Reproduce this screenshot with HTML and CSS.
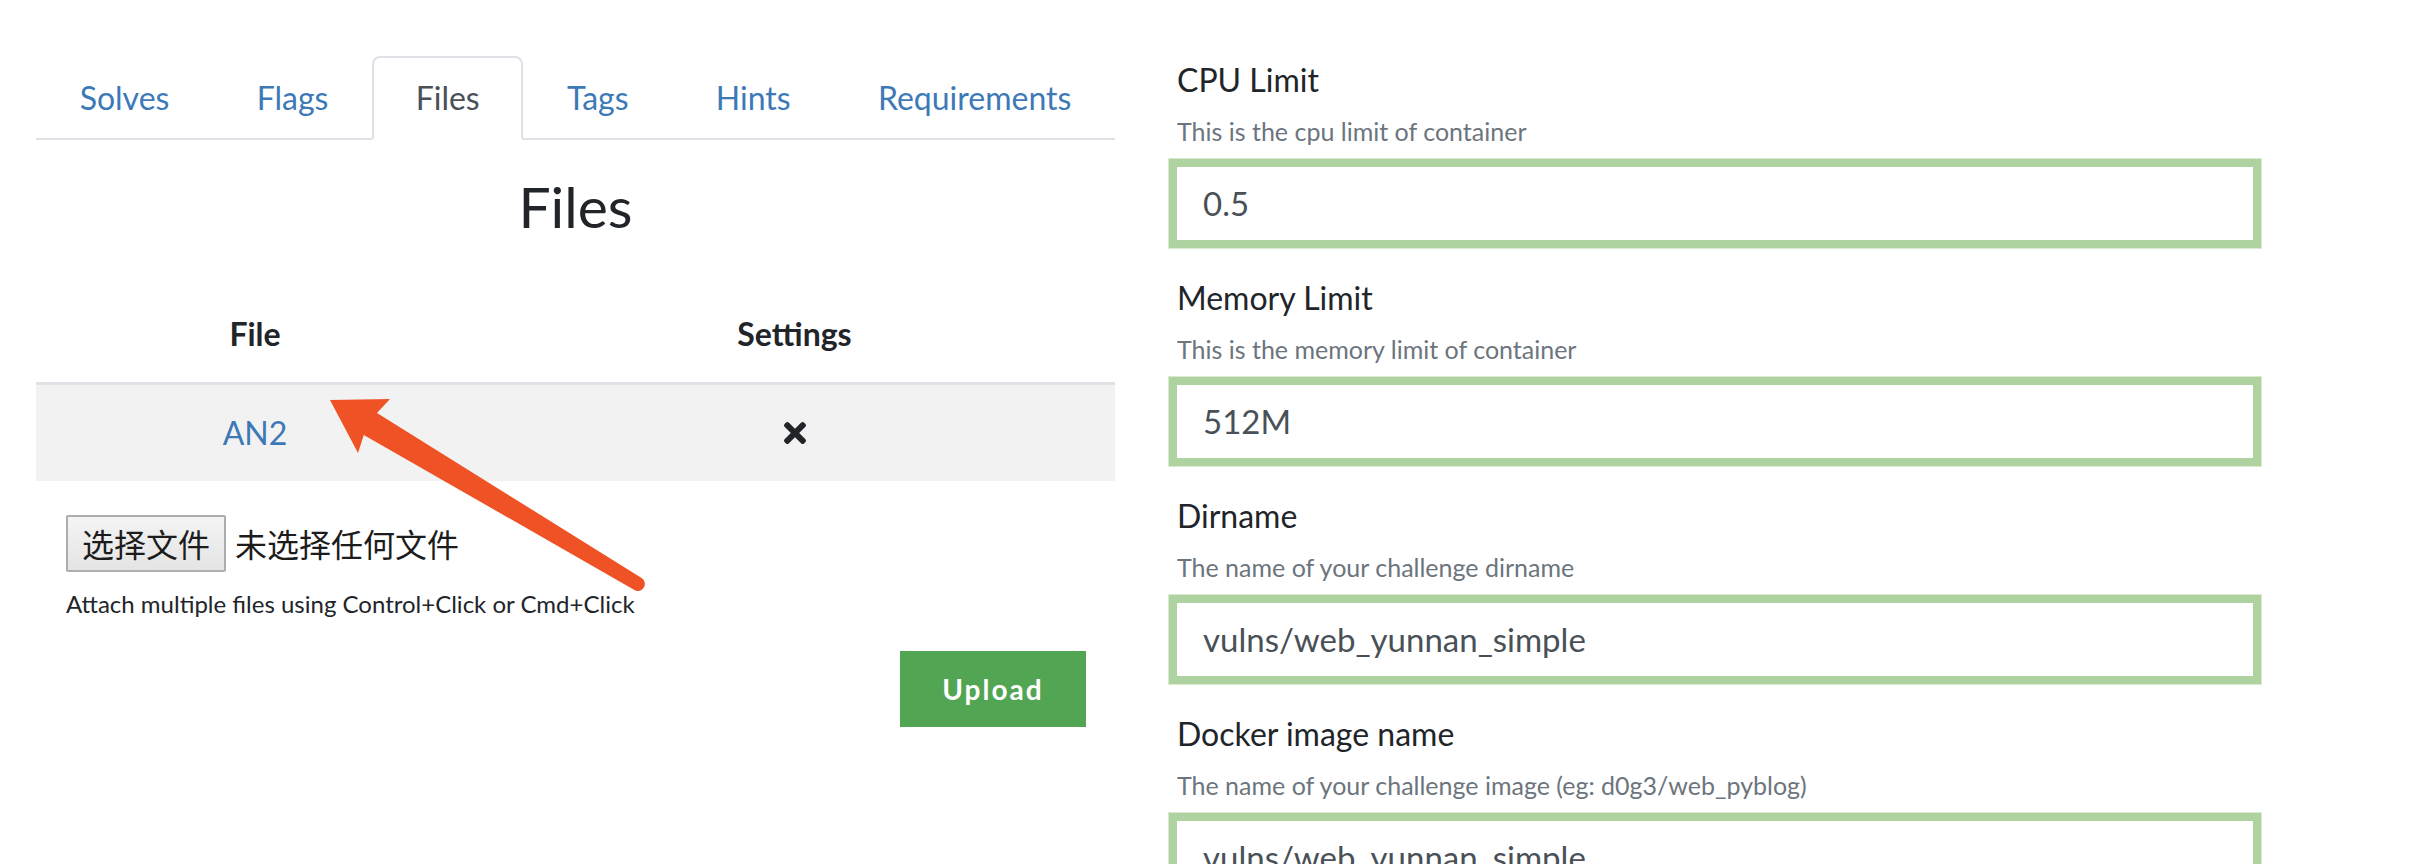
FILE: index.html
```html
<!DOCTYPE html>
<html lang="en">
<head>
<meta charset="utf-8">
<title>Challenge Files</title>
<link rel="stylesheet" href="styles.css">
</head>
<body>
<div class="page">
  <section class="left">
    <nav class="tabs">
      <a class="tab">Solves</a>
      <a class="tab">Flags</a>
      <a class="tab active">Files</a>
      <a class="tab">Tags</a>
      <a class="tab">Hints</a>
      <a class="tab">Requirements</a>
    </nav>
    <h3 class="title">Files</h3>
    <table class="files">
      <thead>
        <tr><th class="col-file">File</th><th>Settings</th></tr>
      </thead>
      <tbody>
        <tr>
          <td class="col-file"><a class="file-link">AN2</a></td>
          <td>
            <svg class="icon-times" width="22" height="32" viewBox="0 0 352 512" aria-hidden="true"><path fill="#212529" d="M242.72 256l100.07-100.07c12.28-12.28 12.28-32.190 0-44.48l-22.24-22.24c-12.28-12.28-32.19-12.28-44.48 0L176 189.28 75.93 89.21c-12.28-12.28-32.19-12.28-44.48 0L9.21 111.45c-12.28 12.28-12.28 32.19 0 44.48L109.28 256 9.21 356.07c-12.28 12.28-12.28 32.19 0 44.48l22.24 22.24c12.28 12.28 32.2 12.28 44.48 0L176 322.72l100.07 100.07c12.28 12.28 32.2 12.28 44.48 0l22.24-22.24c12.28-12.28 12.28-32.19 0-44.48L242.72 256z"/></svg>
          </td>
        </tr>
      </tbody>
    </table>
    <form class="upload">
      <div class="file-picker">
        <button type="button" class="file-btn">选择文件</button>
        <span class="file-none">未选择任何文件</span>
      </div>
      <small class="hint">Attach multiple files using Control+Click or Cmd+Click</small>
      <div class="actions">
        <button type="button" class="btn-upload">Upload</button>
      </div>
    </form>
  </section>

  <section class="right">
    <div class="group">
      <label class="label">CPU Limit</label>
      <small class="desc">This is the cpu limit of container</small>
      <div class="field">0.5</div>
    </div>
    <div class="group">
      <label class="label">Memory Limit</label>
      <small class="desc">This is the memory limit of container</small>
      <div class="field">512M</div>
    </div>
    <div class="group">
      <label class="label">Dirname</label>
      <small class="desc">The name of your challenge dirname</small>
      <div class="field">vulns/web_yunnan_simple</div>
    </div>
    <div class="group">
      <label class="label">Docker image name</label>
      <small class="desc">The name of your challenge image (eg: d0g3/web_pyblog)</small>
      <div class="field">vulns/web_yunnan_simple</div>
    </div>
  </section>
</div>

<svg class="annotation" width="2412" height="864" viewBox="0 0 2412 864" aria-hidden="true">
  <path fill="#ef5224" d="M330 400 L390 399 L377 413 L641.6 578 A7 7 0 0 1 634.4 590 L363.8 435 L358 453 Z"/>
</svg>
</body>
</html>
```

FILE: styles.css
```css
html, body {
  margin: 0;
  padding: 0;
  background: #ffffff;
}

body {
  font-family: Lato, "Noto Sans CJK SC", sans-serif;
  color: #212529;
  font-size: 32px;
  line-height: 48px;
  height: 864px;
  overflow: hidden;
  position: relative;
}

.page {
  display: flex;
  align-items: flex-start;
  gap: 62px;
  padding: 56px 0 0 36px;
}

/* ---------- left column ---------- */
.left {
  width: 1079px;
  flex: none;
}

.tabs {
  display: flex;
  border-bottom: 2px solid #dee2e6;
}

.tab {
  flex: 1 1 auto;
  text-align: center;
  padding: 16px 32px;
  border: 2px solid transparent;
  border-top-left-radius: 8px;
  border-top-right-radius: 8px;
  margin-bottom: -2px;
  color: #3d79b7;
  cursor: pointer;
}

.tab.active {
  color: #495057;
  background: #ffffff;
  border-color: #dee2e6 #dee2e6 #ffffff;
}

.title {
  margin: 33px 0 0;
  text-align: center;
  font-size: 57px;
  line-height: 67px;
  font-weight: 400;
}

.files {
  width: 100%;
  border-collapse: collapse;
  margin-top: 46px;
  text-align: center;
}

.files th {
  font-weight: 700;
  padding: 24px;
  border-bottom: 3px solid #dee2e6;
}

.files td {
  padding: 24px;
  background: #f2f2f2;
}

.files .col-file {
  width: 390px;
}

.file-link {
  color: #3d79b7;
}

.icon-times {
  display: inline-block;
  vertical-align: top;
  margin-top: 8px;
}

.upload {
  padding: 34px 29px 0 30px;
}

.file-picker {
  display: flex;
  align-items: center;
  gap: 9px;
}

.file-btn {
  font-family: "Noto Sans CJK SC", sans-serif;
  font-size: 32px;
  line-height: 53px;
  height: 57px;
  padding: 0 14px;
  border: 2px solid #adadad;
  border-radius: 2px;
  background: linear-gradient(#f4f4f4, #e4e4e4);
  color: #1c1c1c;
}

.file-none {
  font-family: "Noto Sans CJK SC", sans-serif;
  font-size: 32px;
  line-height: 57px;
  color: #1c1c1c;
}

.hint {
  display: block;
  margin-top: 13px;
  font-size: 24px;
  line-height: 38px;
  color: #212529;
}

.actions {
  display: flex;
  justify-content: flex-end;
  margin-top: 28px;
}

.btn-upload {
  font-family: Lato, sans-serif;
  font-weight: 700;
  font-size: 28px;
  letter-spacing: 2px;
  line-height: 42px;
  height: 76px;
  width: 186px;
  border: none;
  border-radius: 0;
  background: #52a552;
  color: #ffffff;
  padding: 0;
}

/* ---------- right column ---------- */
.right {
  width: 1076px;
  flex: none;
}

.group {
  margin-bottom: 34px;
}

.label {
  display: block;
  font-size: 32px;
  line-height: 48px;
  color: #212529;
}

.desc {
  display: block;
  margin-top: 8px;
  font-size: 25px;
  line-height: 38px;
  color: #6c757d;
}

.field {
  margin-top: 17px;
  height: 73px;
  box-sizing: border-box;
  padding: 12px 26px;
  background: #ffffff;
  color: #495057;
  font-size: 33px;
  line-height: 48px;
  box-shadow: 0 0 0 8px #aed2a0, 0 0 0 9px #d9eacf;
}

/* ---------- annotation overlay ---------- */
.annotation {
  position: absolute;
  top: 0;
  left: 0;
  pointer-events: none;
}
```
